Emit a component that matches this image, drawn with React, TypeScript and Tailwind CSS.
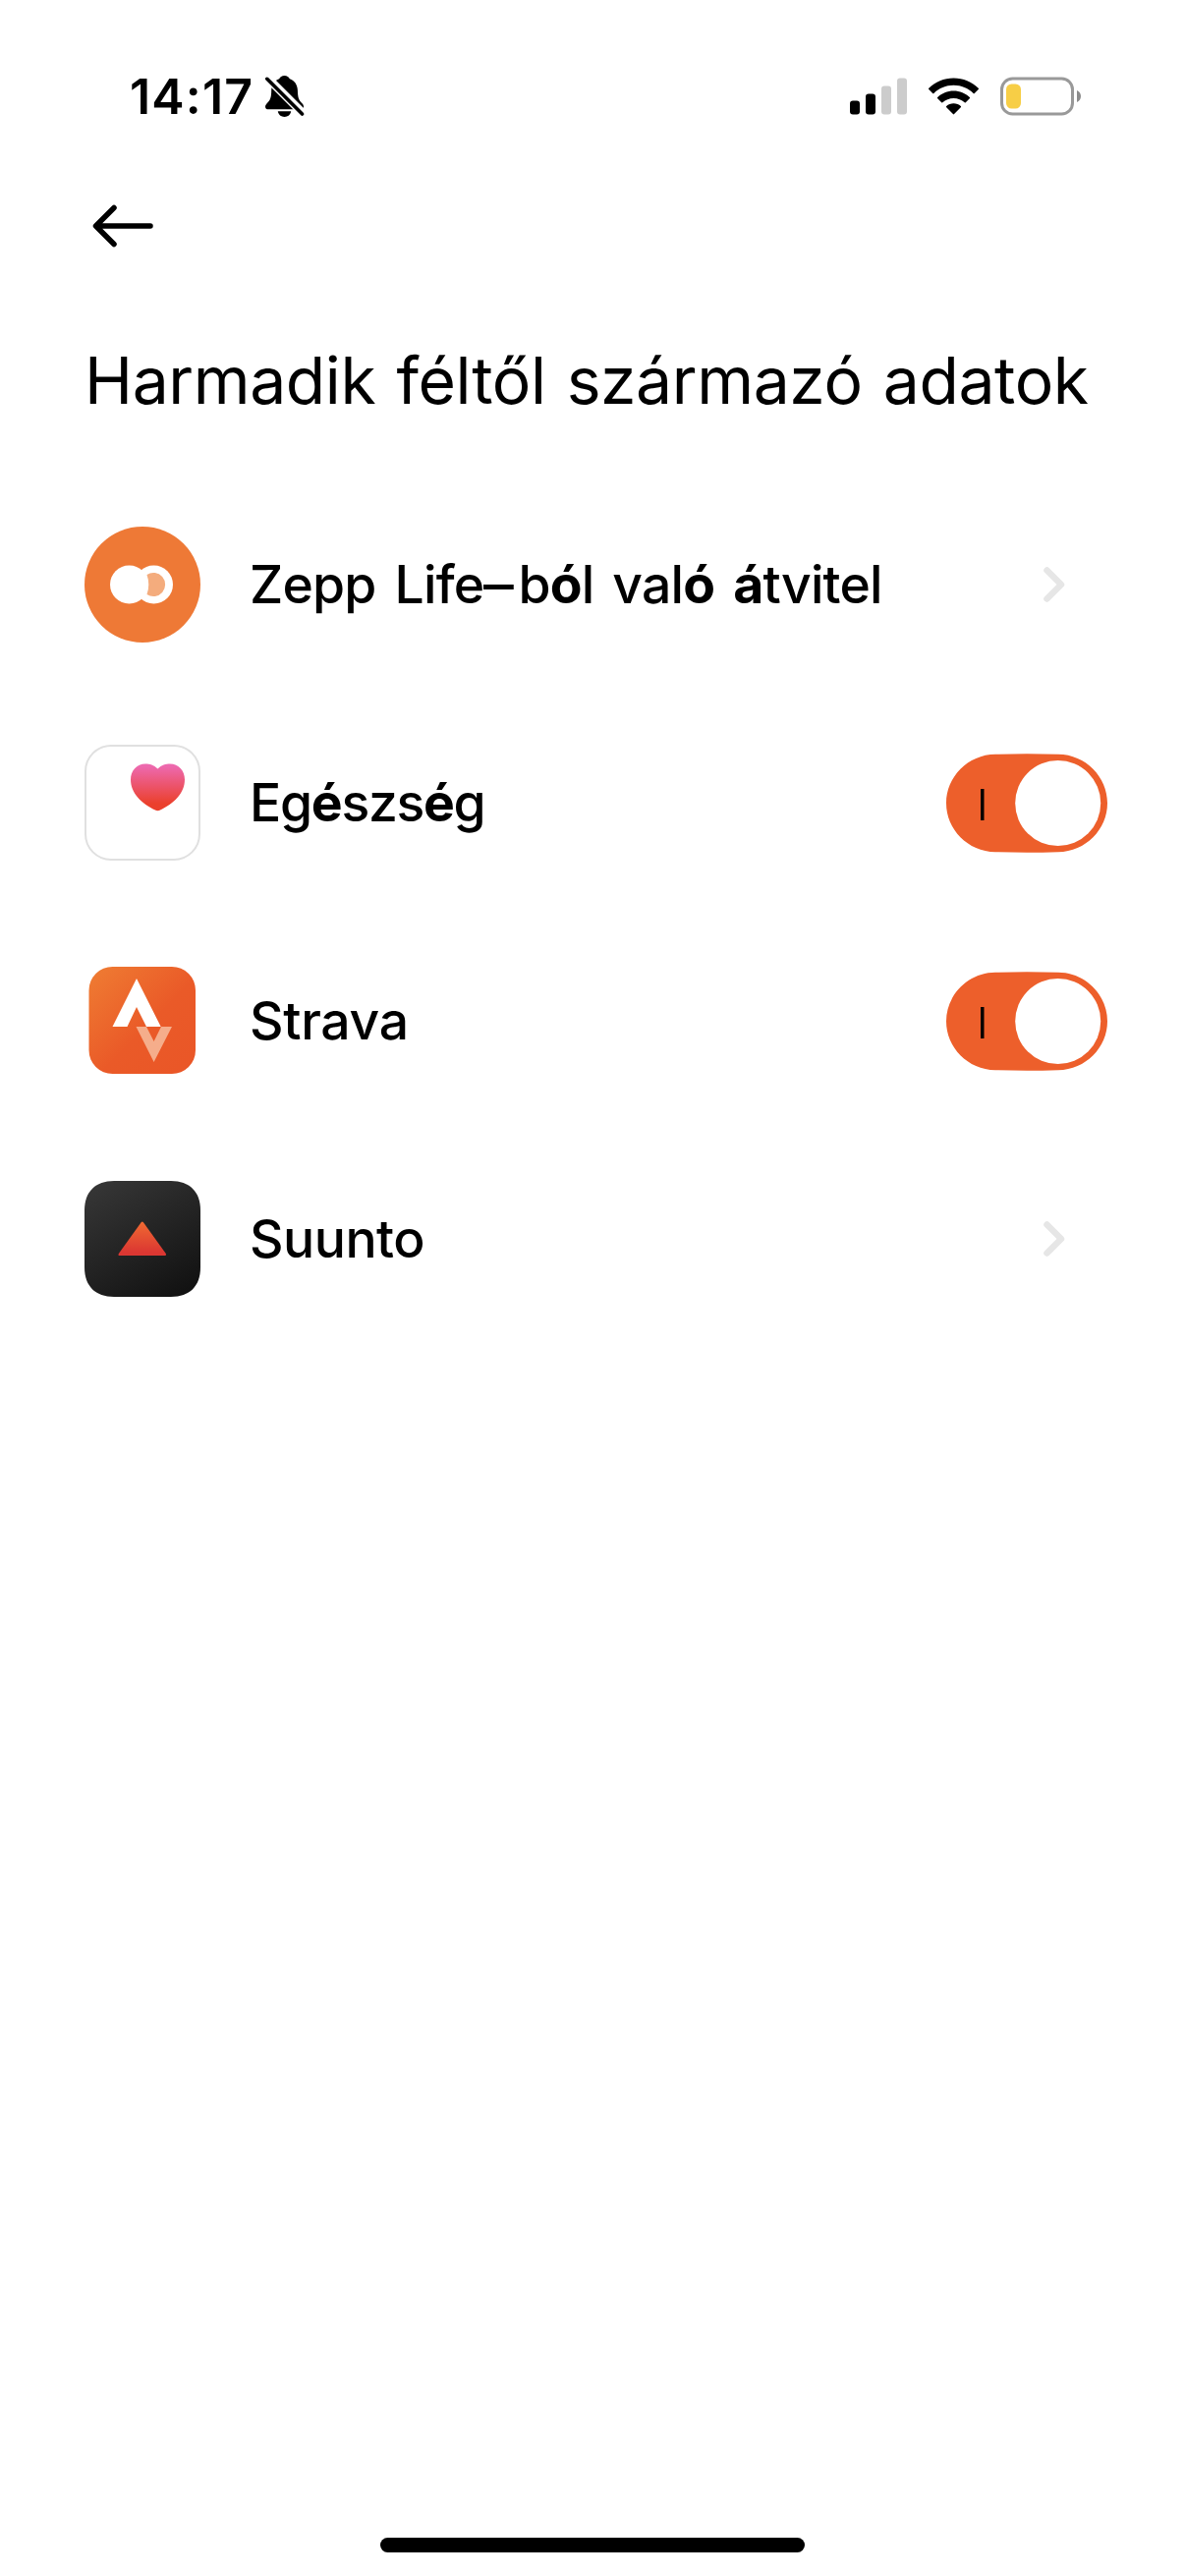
import { useState } from 'react'
import type { ReactNode } from 'react'

function StatusBar() {
    return (
        <div className="flex h-[58px] items-center justify-between pl-[132px] pr-[106px]">
            <div className="flex items-center">
                <span className="w-[138px] text-[50px] leading-none font-semibold tracking-[1.2px]">14:17</span>
                <svg className="h-[44px] w-[40px]" viewBox="0 0 40 44">
                    <path
                        d="M19.5 1c2.6 0 4.6 1.3 5.3 3.2 5 1.7 7.9 6 8.1 11.6.2 8 1.3 10.2 4.3 13.2 1.6 1.6 1.8 2.6 1.8 3.7 0 1.7-1.3 2.6-3 2.6H3.3C1.3 35.3 0 34.4 0 32.7c0-1.2.5-2.3 1.9-3.7C5 26 6.2 23.2 6.2 15.8c.2-5.6 3-9.900 8-11.600C14.900 2.300 16.900 1 19.500 1Z"
                    />
                    <path d="M12.8 37.3h13.4c-.5 3.4-3.2 5.7-6.7 5.7s-6.2-2.3-6.7-5.7Z" />
                    <path d="M-1 0 42 43" stroke="#fff" strokeWidth="8.5" />
                    <path d="M1.8 4.3 37.5 40" stroke="#000" strokeWidth="3.6" strokeLinecap="round" />
                </svg>
            </div>
            <div className="flex items-center">
                <svg className="h-[38px] w-[58px]" viewBox="0 0 58 38">
                    <rect x="0" y="23.5" width="10" height="14" rx="3" />
                    <rect x="16" y="16.5" width="10" height="21" rx="3" />
                    <rect x="32" y="8.5" width="10" height="29" rx="3" fill="#ccc" />
                    <rect x="48" y="0.5" width="10" height="37" rx="3" fill="#ccc" />
                </svg>
                <svg className="ml-[22px] h-[38px] w-[51px]" viewBox="0 0 51 38">
                    <path d="M25.5.5C35.3.5 44.2 4.4 50.7 10.7a.8.8 0 0 1 0 1.2l-3.9 4a.9.9 0 0 1-1.2 0C40.4 10.9 33.3 7.8 25.5 7.8S10.6 10.9 5.4 15.9a.9.9 0 0 1-1.2 0l-3.9-4a.8.8 0 0 1 0-1.2C6.8 4.4 15.7.5 25.5.5Z" />
                    <path d="M25.5 13.5c6.3 0 12 2.5 16.3 6.5a.8.8 0 0 1 0 1.2l-4 4a.8.8 0 0 1-1.1 0c-3-2.7-6.9-4.3-11.2-4.3s-8.2 1.6-11.2 4.3a.8.8 0 0 1-1.1 0l-4-4a.8.8 0 0 1 0-1.2c4.3-4 10-6.5 16.3-6.5Z" />
                    <path d="M25.5 26.3c2.8 0 5.4 1 7.3 2.7a.8.8 0 0 1 0 1.2l-6.7 6.9a.8.8 0 0 1-1.2 0l-6.7-6.9a.8.8 0 0 1 0-1.2c1.9-1.7 4.5-2.7 7.3-2.7Z" />
                </svg>
                <svg className="ml-[22px] h-[40px] w-[82px]" viewBox="0 0 82 40">
                    <rect x="1.5" y="2" width="72" height="36" rx="11" fill="none" stroke="#999" strokeWidth="3" />
                    <rect x="6" y="7.5" width="15" height="25" rx="5.5" fill="#f7ce46" />
                    <path d="M78 14c2.4 1 4 3.3 4 6s-1.6 5-4 6Z" fill="#8c8c8c" />
                </svg>
            </div>
        </div>
    )
}

function ZeppIcon() {
    return (
        <svg className="size-[118px]" viewBox="0 0 118 118">
            <circle cx="59" cy="59" r="59" fill="#ee7936" />
            <circle cx="45.5" cy="59" r="19.5" fill="#fff" />
            <circle cx="70.5" cy="59" r="19.5" fill="#fff" />
            <path d="M63.5 49A12 12 0 1 1 63.5 69Q67 59 63.5 49Z" fill="#f4ac7d" />
        </svg>
    )
}

function HealthIcon() {
    return (
        <svg className="size-[118px]" viewBox="0 0 118 118">
            <defs>
                <linearGradient id="heart" x1="0" y1="0" x2="0" y2="1">
                    <stop offset="0.05" stopColor="#ed69ae" />
                    <stop offset="0.85" stopColor="#eb402d" />
                </linearGradient>
            </defs>
            <rect x="1" y="1" width="116" height="116" rx="26" fill="#fff" stroke="#e0e0e0" strokeWidth="2" />
            <path
                d="M74.5 24.5C70.5 20.5 66.5 19.5 62 19.5 53 19.5 47 26.5 47 35.5 47 49.5 58 60 72.5 66.8Q74.5 67.5 76.5 66.8C91 60 102 49.5 102 35.5 102 26.5 96 19.5 87 19.5 82.5 19.5 78.5 20.5 74.5 24.5Z"
                fill="url(#heart)"
            />
        </svg>
    )
}

function StravaIcon() {
    return (
        <svg className="size-[118px]" viewBox="0 0 118 118">
            <defs>
                <linearGradient id="strava" x1="0" y1="0" x2="1" y2="1">
                    <stop offset="0" stopColor="#ef7d33" />
                    <stop offset="0.55" stopColor="#ea5a28" />
                    <stop offset="1" stopColor="#ea5627" />
                </linearGradient>
            </defs>
            <rect x="4.5" y="4" width="108.5" height="109" rx="24" fill="url(#strava)" />
            <path d="M53 16 77.7 65H63L53 45 43.5 65H28.5Z" fill="#fff" />
            <path d="M52.5 65H63L70.6 80 78 65H89L70.6 101Z" fill="#f5ad8b" />
        </svg>
    )
}

function SuuntoIcon() {
    return (
        <svg className="size-[118px]" viewBox="0 0 118 118">
            <defs>
                <linearGradient id="suunto" x1="0.2" y1="0" x2="0.8" y2="1">
                    <stop offset="0" stopColor="#353535" />
                    <stop offset="1" stopColor="#121212" />
                </linearGradient>
                <linearGradient id="peak" x1="0" y1="0" x2="0" y2="1">
                    <stop offset="0" stopColor="#f06a32" />
                    <stop offset="0.9" stopColor="#db3732" />
                </linearGradient>
            </defs>
            <path
                d="M30 0H88C107 0 118 11 118 30V88C118 107 107 118 88 118H30C11 118 0 107 0 88V30C0 11 11 0 30 0Z"
                fill="url(#suunto)"
            />
            <path d="M57.8 42Q58.8 41 59.8 42L82.8 74Q83.5 76 82 76H35.5Q34 76 34.8 74Z" fill="url(#peak)" />
        </svg>
    )
}

function Toggle({ label }: { label: string }) {
    const [on, setOn] = useState(true)

    return (
        <button role="switch" aria-checked={on} aria-label={label} onClick={() => setOn(!on)}>
            <svg className="h-[101px] w-[164px]" viewBox="0 0 164 101">
                <path
                    d="M50 .8Q82-.4 114 .8C142 1 164 24 164 50.5S142 100 114 100.2Q82 101.4 50 100.2C22 100 0 77 0 50.5S22 1 50 .8Z"
                    fill={on ? '#ed5f2b' : '#d9d9d9'}
                />
                {on && <rect x="35" y="36" width="3.5" height="32" fill="#000" />}
                <circle cx={on ? 113.7 : 50.3} cy="50.5" r="43.5" fill="#fff" />
            </svg>
        </button>
    )
}

function Chevron() {
    return (
        <svg className="mr-[43px] h-[36px] w-[22px]" viewBox="0 0 22 36" fill="none">
            <path d="M3.5 3.5 18 18 3.5 32.5" stroke="#e6e6e6" strokeWidth="6.5" strokeLinecap="round" strokeLinejoin="round" />
        </svg>
    )
}

function Row({ icon, label, action }: { icon: ReactNode; label: ReactNode; action: ReactNode }) {
    return (
        <li className="flex h-[222px] items-center pl-[86px] pr-[79px]">
            {icon}
            <span className="ml-[50px] flex-1 whitespace-nowrap text-[53.5px] leading-[64px] font-medium">{label}</span>
            {action}
        </li>
    )
}

export default function App() {
    return (
        <div className="flex h-[2622px] w-[1206px] flex-col bg-white pt-[69px] font-['Inter','Liberation_Sans',sans-serif] text-black">
            <StatusBar />

            <header className="mt-[81px] px-[94px]">
                <button className="block" aria-label="Vissza">
                    <svg className="h-[44px] w-[62px]" viewBox="0 0 62 44" fill="none">
                        <path d="M22 3.5 3.5 22 22 40.5M4 22H59" stroke="#000" strokeWidth="5.5" strokeLinecap="round" strokeLinejoin="round" />
                    </svg>
                </button>
            </header>

            <h1 className="mt-[95px] h-[80px] whitespace-nowrap pl-[86px] text-[66px] leading-[80px] font-normal tracking-[-0.4px] [word-spacing:3px]">
                Harmadik féltől származó adatok
            </h1>

            <ul className="mt-[57px]">
                <Row
                    icon={<ZeppIcon />}
                    label={
                        <span className="tracking-[-0.8px] [word-spacing:5.5px]">
                            Zepp Life<span className="inline-block origin-left scale-x-115 pr-[9px]">–</span>b<b>ó</b>l val<b>ó</b> <b>á</b>tvitel
                        </span>
                    }
                    action={<Chevron />}
                />
                <Row
                    icon={<HealthIcon />}
                    label={
                        <span className="tracking-[-1.3px]">
                            Eg<b>é</b>szs<b>é</b>g
                        </span>
                    }
                    action={<Toggle label="Egészség" />}
                />
                <Row
                    icon={<StravaIcon />}
                    label={<span className="tracking-[-0.3px]">Strava</span>}
                    action={<Toggle label="Strava" />}
                />
                <Row
                    icon={<SuuntoIcon />}
                    label={<span className="tracking-[-0.5px]">Suunto</span>}
                    action={<Chevron />}
                />
            </ul>

            {/* Home indicator */}
            <div className="mx-auto mt-auto mb-[24px] h-[15px] w-[432px] rounded-full bg-black" />
        </div>
    )
}
